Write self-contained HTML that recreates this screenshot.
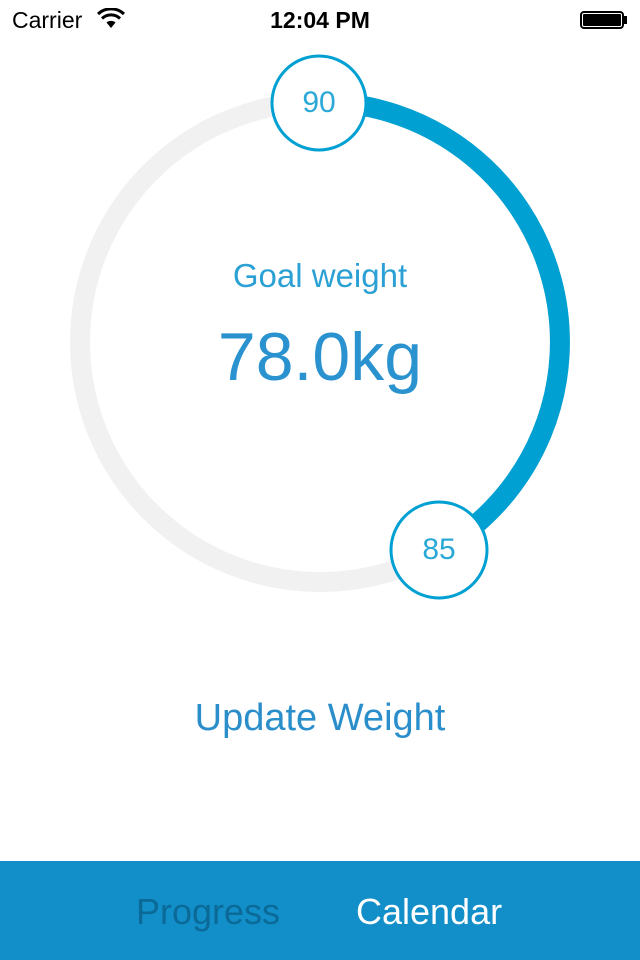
<!DOCTYPE html>
<html><head><meta charset="utf-8"><style>
body{margin:0;width:640px;height:960px;background:#fff;position:relative;overflow:hidden;font-family:"Liberation Sans",sans-serif}
.t{position:absolute;white-space:nowrap}
</style></head><body>
<div class="t" style="left:12px;top:7px;font-size:23px;color:#000">Carrier</div>
<svg style="position:absolute;left:97px;top:8px" width="28" height="22" viewBox="0 0 28 22"><path d="M14 20 L9.5 14.5 A7 7 0 0 1 18.5 14.5 Z" fill="#000"/><path d="M5 10.5 A13 13 0 0 1 23 10.5" stroke="#000" stroke-width="3" fill="none"/><path d="M1 6 A19 19 0 0 1 27 6" stroke="#000" stroke-width="3" fill="none"/></svg>
<div class="t" style="left:0;width:640px;text-align:center;top:7px;font-size:23px;font-weight:bold;color:#000">12:04 PM</div>
<div style="position:absolute;left:580px;top:11px;width:44px;height:18px;border:2px solid #000;border-radius:4px;box-sizing:border-box;padding:1px"><div style="background:#000;width:100%;height:100%;border-radius:1px"></div></div>
<div style="position:absolute;left:624px;top:16px;width:3px;height:8px;background:#000"></div>
<svg style="position:absolute;left:0;top:0" width="640" height="700">
<circle cx="320" cy="342" r="240" fill="none" stroke="#f1f1f1" stroke-width="20"/>
<path d="M320 102 A240 240 0 0 1 440 549.8" fill="none" stroke="#00a0d2" stroke-width="20"/>
<circle cx="319" cy="103" r="47" fill="#fff" stroke="#00a0d2" stroke-width="3"/>
<circle cx="439" cy="550" r="48" fill="#fff" stroke="#00a0d2" stroke-width="3"/>
</svg>
<div class="t" style="left:269px;width:100px;text-align:center;top:86px;font-size:30px;color:#2aa8d6">90</div>
<div class="t" style="left:389px;width:100px;text-align:center;top:533px;font-size:30px;color:#2aa8d6">85</div>
<div class="t" style="left:0;width:640px;text-align:center;top:257px;font-size:33px;color:#2aa0d4">Goal weight</div>
<div class="t" style="left:0;width:640px;text-align:center;top:318px;font-size:68px;color:#2a92cf">78.0kg</div>
<div class="t" style="left:0;width:640px;text-align:center;top:697px;font-size:38px;color:#2a8ecb">Update Weight</div>
<div style="position:absolute;left:0;top:861px;width:640px;height:99px;background:#128ec8"></div>
<div class="t" style="left:136px;top:891px;font-size:36px;color:#0b6a98">Progress</div>
<div class="t" style="left:356px;top:891px;font-size:36px;color:#fff">Calendar</div>
</body></html>
